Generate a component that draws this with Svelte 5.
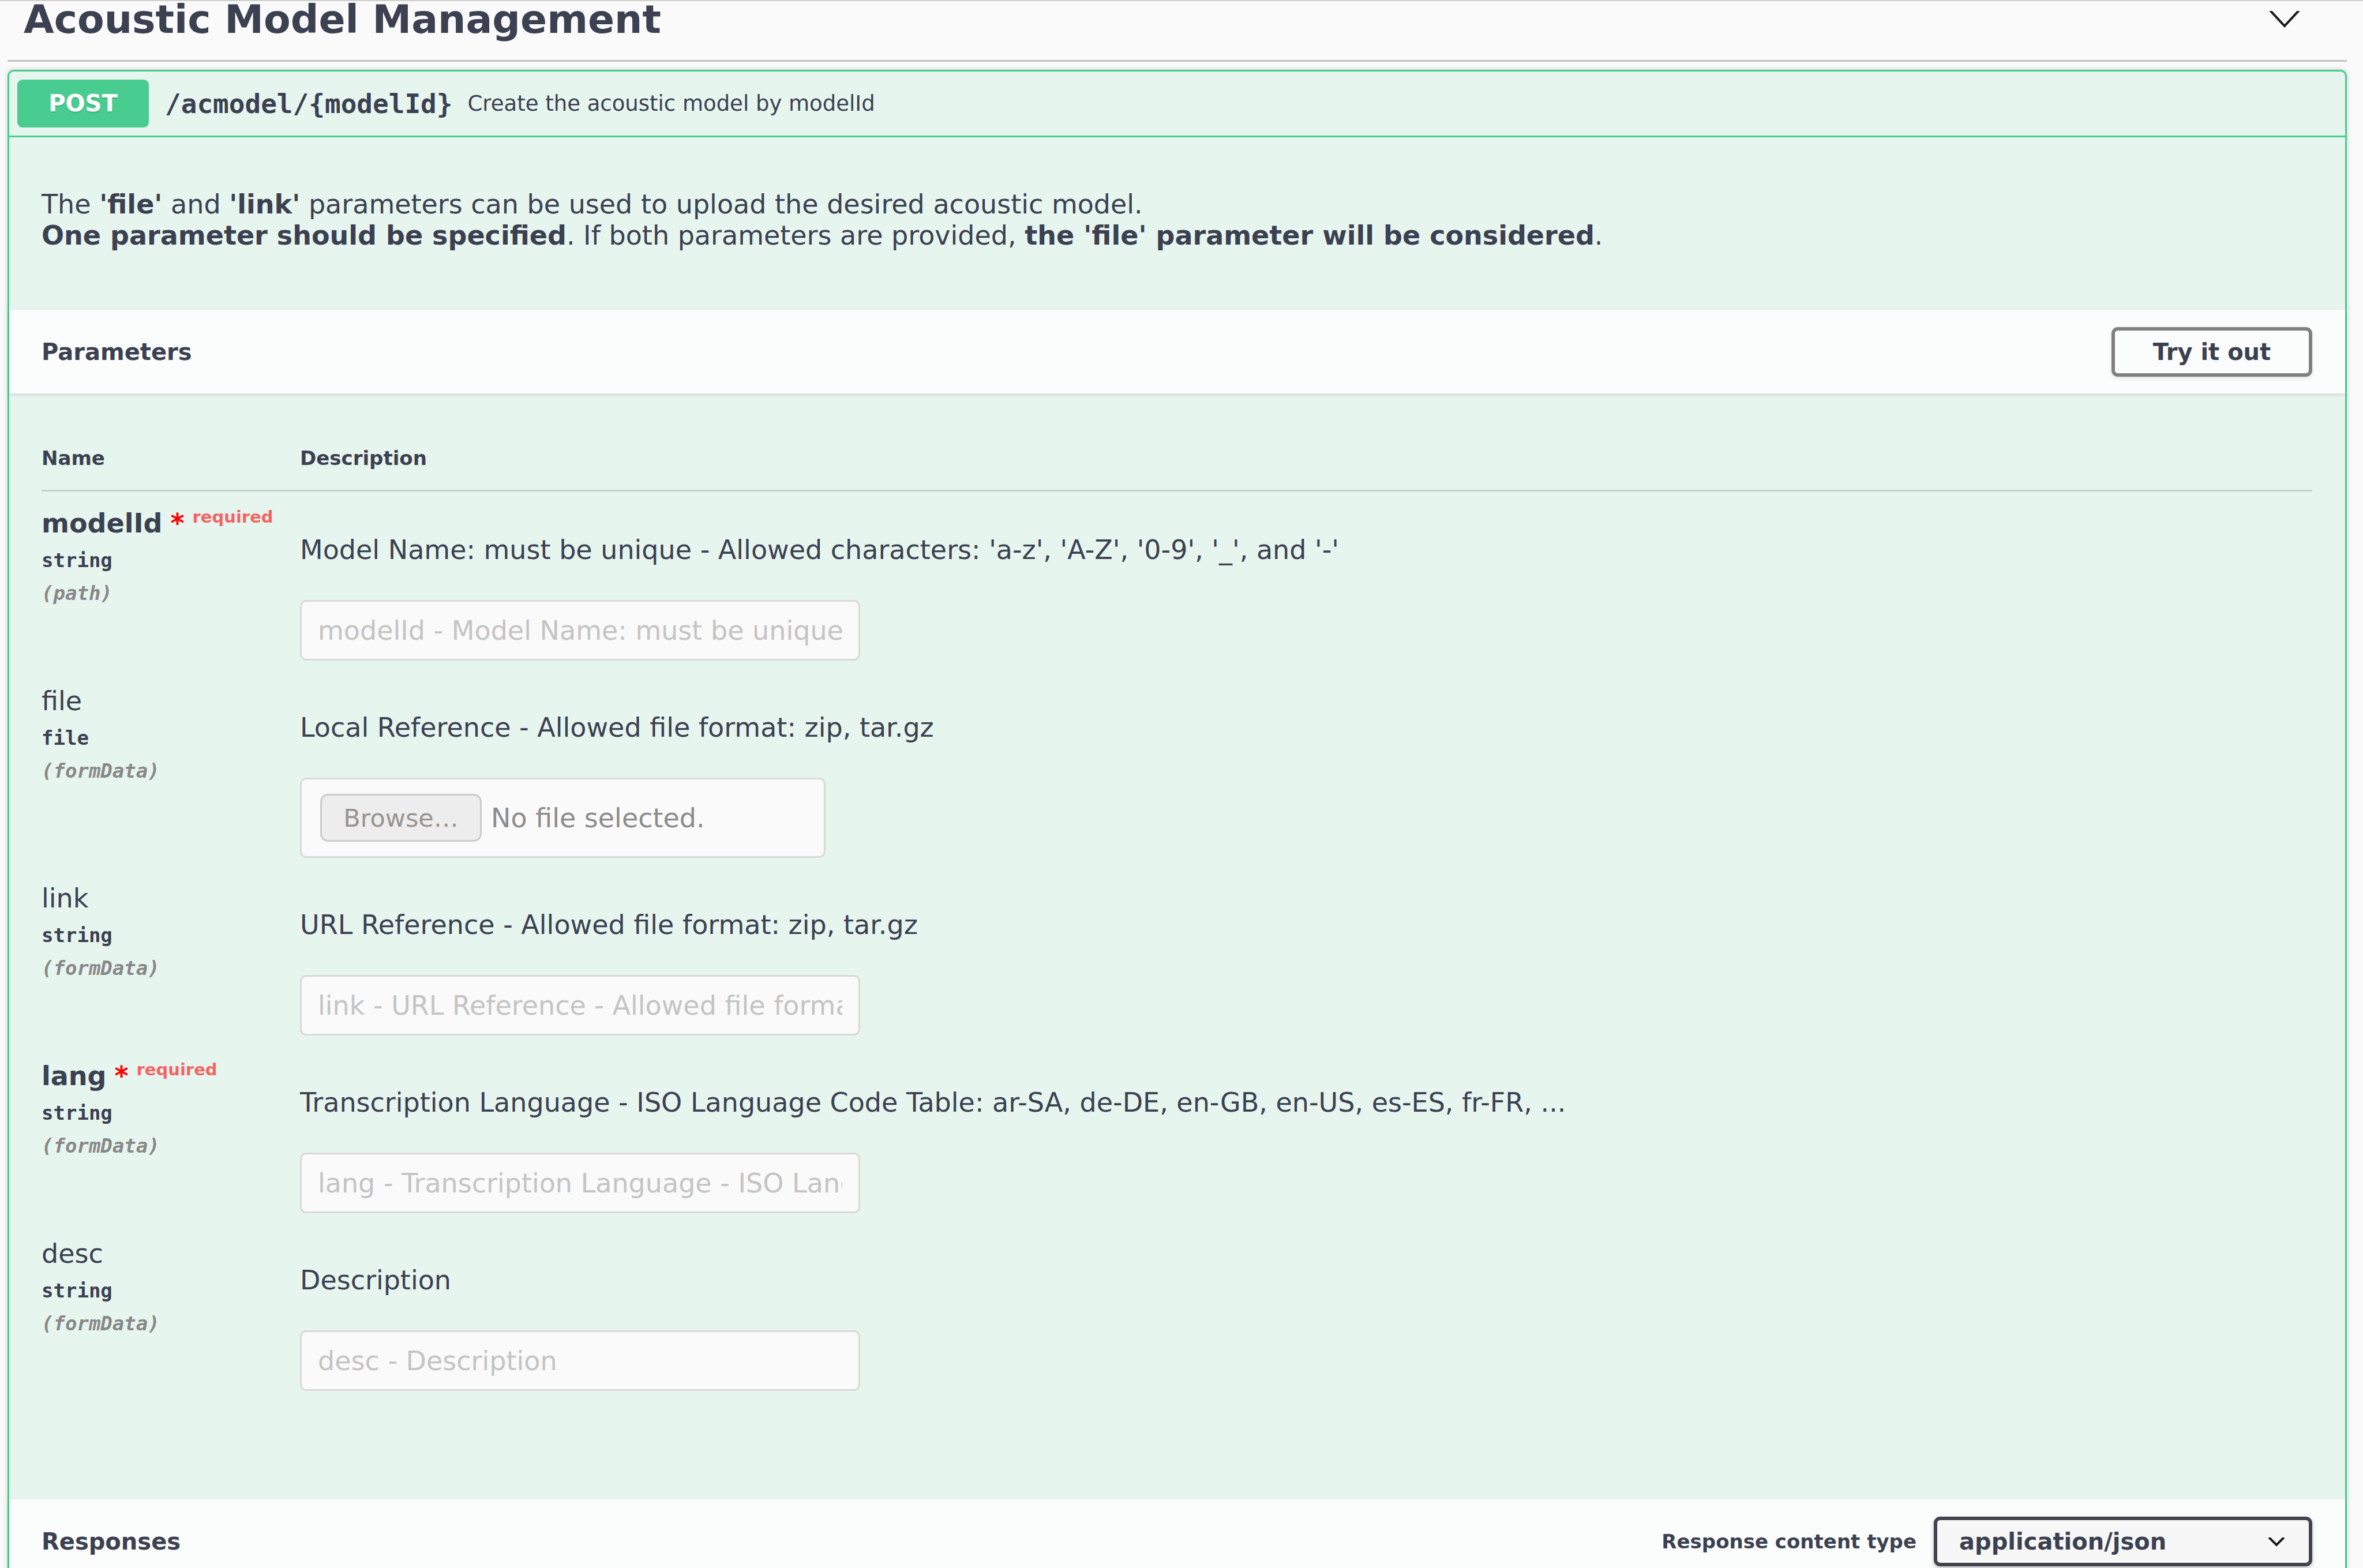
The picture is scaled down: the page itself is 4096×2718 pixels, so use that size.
<script>
  const parameters = [
    {
      name: 'modelId',
      required: true,
      type: 'string',
      location: 'path',
      text: "Model Name: must be unique - Allowed characters: 'a-z', 'A-Z', '0-9', '_', and '-'",
      placeholder: 'modelId - Model Name: must be unique'
    },
    {
      name: 'file',
      required: false,
      type: 'file',
      location: 'formData',
      text: 'Local Reference - Allowed file format: zip, tar.gz'
    },
    {
      name: 'link',
      required: false,
      type: 'string',
      location: 'formData',
      text: 'URL Reference - Allowed file format: zip, tar.gz',
      placeholder: 'link - URL Reference - Allowed file format: zip, tar.gz'
    },
    {
      name: 'lang',
      required: true,
      type: 'string',
      location: 'formData',
      text: 'Transcription Language - ISO Language Code Table: ar-SA, de-DE, en-GB, en-US, es-ES, fr-FR, ...',
      placeholder: 'lang - Transcription Language - ISO Language Code Table'
    },
    {
      name: 'desc',
      required: false,
      type: 'string',
      location: 'formData',
      text: 'Description',
      placeholder: 'desc - Description'
    }
  ];
</script>

<main class="page">
  <header class="tag-header">
    <h1>Acoustic Model Management</h1>
    <button class="collapse" type="button" aria-label="Collapse section">
      <svg width="52" height="30" viewBox="0 0 52 30" aria-hidden="true">
        <polyline points="0,-2 26,26 52,-2" />
      </svg>
    </button>
  </header>

  <section class="operation">
    <div class="summary">
      <span class="method">POST</span>
      <code class="path">/acmodel/&#123;modelId&#125;</code>
      <span class="summary-text">Create the acoustic model by modelId</span>
    </div>

    <div class="description">
      <p>
        The <strong>'file'</strong> and <strong>'link'</strong> parameters can be used to upload the desired acoustic model.<br />
        <strong>One parameter should be specified</strong>. If both parameters are provided, <strong>the 'file' parameter will be considered</strong>.
      </p>
    </div>

    <div class="section-header">
      <h2>Parameters</h2>
      <button class="try" type="button">Try it out</button>
    </div>

    <div class="table-wrap">
      <table>
        <thead>
          <tr>
            <th class="name-col" scope="col">Name</th>
            <th scope="col">Description</th>
          </tr>
        </thead>
        <tbody>
          {#each parameters as p}
            <tr>
              <td>
                <div class="name" class:required={p.required}>
                  <label for={`field-${p.name}`}>{p.name}</label>
                  {#if p.required}
                    <span class="star">*</span><span class="flag">required</span>
                  {/if}
                </div>
                <div class="type">{p.type}</div>
                <div class="location">({p.location})</div>
              </td>
              <td>
                <p class="text">{p.text}</p>
                {#if p.type === 'file'}
                  <div class="file-box">
                    <span class="browse">Browse…</span>
                    <span>No file selected.</span>
                    <input class="file-input" id={`field-${p.name}`} type="file" disabled />
                  </div>
                {:else}
                  <input class="text-input" id={`field-${p.name}`} type="text" placeholder={p.placeholder} disabled />
                {/if}
              </td>
            </tr>
          {/each}
        </tbody>
      </table>
    </div>

    <div class="section-header">
      <h2>Responses</h2>
      <div class="content-type">
        <label for="content-type">Response content type</label>
        <div class="select-wrap">
          <select id="content-type">
            <option>application/json</option>
          </select>
          <svg class="caret" width="28" height="16" viewBox="0 0 28 16" aria-hidden="true">
            <polyline points="1,0 14,13 27,0" />
          </svg>
        </div>
      </div>
    </div>
  </section>
</main>

<style>
  :global(body) {
    background: #fafafa;
    overflow: hidden;
  }

  .page,
  .page * {
    box-sizing: border-box;
  }

  .page {
    height: 100vh;
    overflow: hidden;
    border-top: 2px solid #d0d0ca;
    padding: 0 28px 0 13px;
    background: #fafafa;
    color: #3b4151;
    font-family: 'DejaVu Sans', sans-serif;
    font-size: 46px;
    line-height: 54px;
  }

  h1,
  h2,
  p {
    margin: 0;
  }

  button,
  input,
  select {
    margin: 0;
    color: inherit;
    font-family: inherit;
  }

  .tag-header {
    display: flex;
    align-items: flex-start;
    justify-content: space-between;
    margin-bottom: 14px;
    padding: 0 82px 38px 28px;
    border-bottom: 3px solid rgba(59, 65, 81, 0.3);
  }

  h1 {
    font-size: 68px;
    line-height: 64px;
    white-space: nowrap;
  }

  .collapse {
    padding: 17px 0 0;
    border: 0;
    background: none;
    line-height: 0;
  }

  polyline {
    fill: none;
    stroke: #1a1a1a;
    stroke-width: 4;
  }

  .operation {
    border: 3px solid #49cc90;
    border-radius: 11px;
    background: rgba(73, 204, 144, 0.1);
    box-shadow: 0 0 9px rgba(0, 0, 0, 0.19);
  }

  .summary {
    display: flex;
    align-items: center;
    padding: 14px;
    border-bottom: 3px solid #49cc90;
  }

  .method {
    min-width: 228px;
    padding: 17px 43px;
    border-radius: 9px;
    background: #49cc90;
    color: #fff;
    font-size: 40px;
    font-weight: 700;
    line-height: 49px;
    text-align: center;
    text-shadow: 0 3px 0 rgba(0, 0, 0, 0.1);
  }

  .path {
    padding: 0 26px 0 28px;
    font-family: 'DejaVu Sans Mono', monospace;
    font-weight: 700;
  }

  .summary-text {
    font-size: 37px;
  }

  .description {
    padding: 89px 57px 102px 56px;
  }

  .section-header {
    display: flex;
    align-items: center;
    justify-content: space-between;
    min-height: 145px;
    padding: 23px 57px 23px 56px;
    background: rgba(255, 255, 255, 0.8);
    box-shadow: 0 3px 6px rgba(0, 0, 0, 0.1);
  }

  h2 {
    font-size: 40px;
    line-height: 48px;
  }

  .try {
    width: 348px;
    height: 86px;
    padding: 0;
    border: 6px solid #808080;
    border-radius: 11px;
    background: transparent;
    box-shadow: 0 3px 6px rgba(0, 0, 0, 0.1);
    font-size: 40px;
    font-weight: 700;
  }

  .table-wrap {
    padding: 57px 57px 173px 56px;
  }

  table {
    width: 100%;
    border-spacing: 0;
    border-collapse: separate;
  }

  th {
    padding: 34px 0;
    border-bottom: 3px solid rgba(59, 65, 81, 0.2);
    font-size: 34px;
    line-height: 42px;
    text-align: left;
  }

  .name-col {
    width: 448px;
  }

  td {
    padding: 28px 0 0;
    vertical-align: top;
  }

  .name {
    display: flex;
    align-items: flex-start;
    white-space: nowrap;
  }

  .required {
    font-weight: 700;
  }

  .star {
    margin-left: 14px;
    color: #f00;
  }

  .flag {
    margin-left: 14px;
    color: rgba(255, 0, 0, 0.6);
    font-size: 29px;
    line-height: 32px;
  }

  .type,
  .location {
    font-family: 'DejaVu Sans Mono', monospace;
    font-size: 34px;
    font-weight: 700;
    line-height: 40px;
  }

  .type {
    padding: 17px 0;
  }

  .location {
    color: #888;
    font-style: italic;
  }

  .text {
    margin: 46px 0 60px;
  }

  .text-input,
  .file-box {
    max-width: 100%;
    margin-bottom: 15px;
    border: 3px solid #d9d9d9;
    border-radius: 11px;
    background: #fafafa;
  }

  .text-input {
    display: block;
    width: 971px;
    height: 105px;
    padding: 0 28px;
    font-size: 46px;
  }

  .text-input::placeholder {
    color: #c4c4c4;
    opacity: 1;
  }

  .file-box {
    position: relative;
    display: flex;
    align-items: center;
    gap: 16px;
    width: 911px;
    height: 139px;
    padding: 0 32px;
    color: #8c8c8c;
  }

  .browse {
    width: 280px;
    padding: 12px 0 11px;
    border: 3px solid #cbcbcb;
    border-radius: 14px;
    background: #ededed;
    color: #989590;
    font-size: 43px;
    text-align: center;
  }

  .file-input {
    position: absolute;
    inset: 0;
    width: 100%;
    opacity: 0;
  }

  .content-type {
    display: flex;
    align-items: center;
    gap: 30px;
    font-size: 34px;
    font-weight: 700;
  }

  .select-wrap {
    position: relative;
  }

  select {
    display: block;
    width: 656px;
    height: 86px;
    padding: 0 114px 0 38px;
    border: 6px solid #41444e;
    border-radius: 11px;
    appearance: none;
    background: #f7f7f7;
    box-shadow: 0 3px 6px rgba(0, 0, 0, 0.25);
    font-size: 40px;
    font-weight: 700;
  }

  .caret {
    position: absolute;
    top: 36px;
    right: 48px;
    pointer-events: none;
  }
</style>
